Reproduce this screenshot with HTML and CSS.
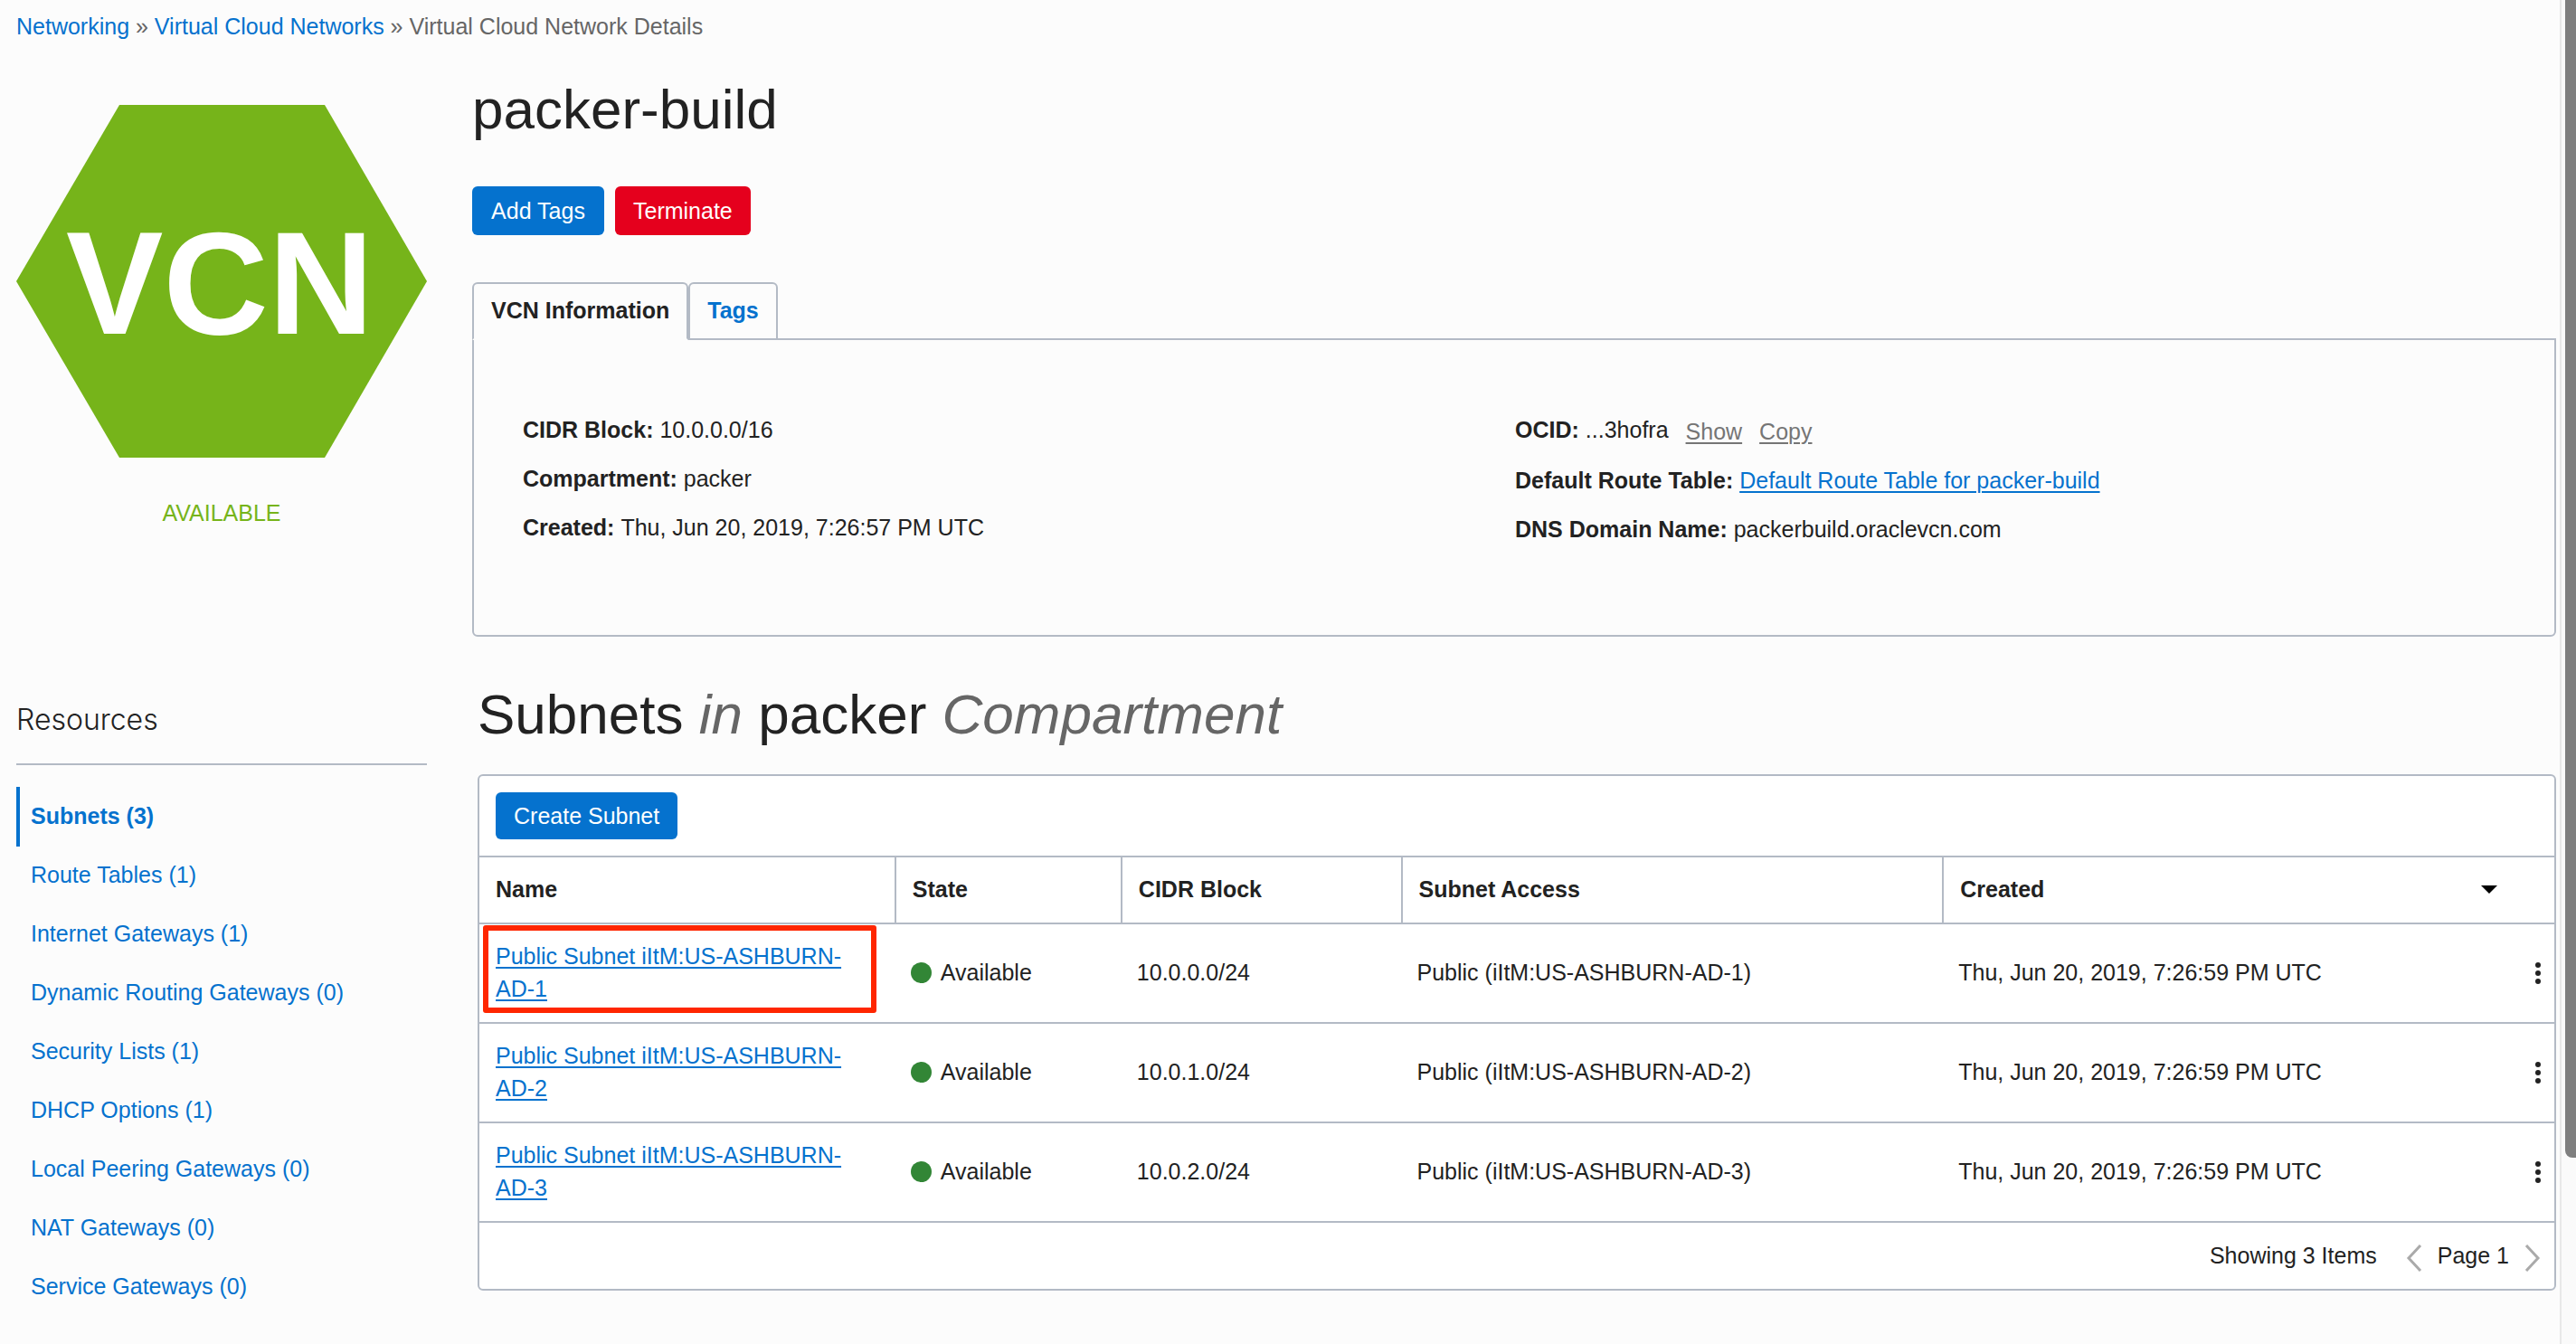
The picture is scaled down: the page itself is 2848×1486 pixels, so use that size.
FILE: index.html
```html
<!DOCTYPE html>
<html lang="en">
<head>
<meta charset="utf-8">
<title>packer-build - Virtual Cloud Network Details</title>
<link rel="stylesheet" href="styles.css">
</head>
<body>
<div class="page">
  <nav class="breadcrumb" aria-label="Breadcrumb">
    <a href="#">Networking</a> » <a href="#">Virtual Cloud Networks</a> » <span>Virtual Cloud Network Details</span>
  </nav>

  <div class="layout">
    <aside class="status">
      <svg class="status-icon" viewBox="0 0 454 390" role="img" aria-label="VCN">
        <polygon points="0,195 114,0 341,0 454,195 341,390 114,390"/>
        <text x="225" y="253" text-anchor="middle">VCN</text>
      </svg>
      <p class="status-label">AVAILABLE</p>
    </aside>

    <main class="details">
      <h1>packer-build</h1>
      <div class="actions">
        <button type="button" class="btn btn-primary">Add Tags</button>
        <button type="button" class="btn btn-danger">Terminate</button>
      </div>
      <div class="tabs" role="tablist">
        <button type="button" class="tab tab-active" role="tab" aria-selected="true">VCN Information</button>
        <button type="button" class="tab" role="tab" aria-selected="false">Tags</button>
      </div>
      <div class="panel" role="tabpanel">
        <dl class="facts">
          <div><dt>CIDR Block:</dt> <dd>10.0.0.0/16</dd></div>
          <div><dt>Compartment:</dt> <dd>packer</dd></div>
          <div><dt>Created:</dt> <dd>Thu, Jun 20, 2019, 7:26:57 PM UTC</dd></div>
        </dl>
        <dl class="facts">
          <div class="fact-ocid"><dt>OCID:</dt> <dd>...3hofra</dd> <a class="muted" href="#">Show</a> <a class="muted" href="#">Copy</a></div>
          <div><dt>Default Route Table:</dt> <dd><a class="link" href="#">Default Route Table for packer-build</a></dd></div>
          <div><dt>DNS Domain Name:</dt> <dd>packerbuild.oraclevcn.com</dd></div>
        </dl>
      </div>
    </main>

    <nav class="resources" aria-label="Resources">
      <h3>Resources</h3>
      <ul>
        <li><a class="current" href="#">Subnets (3)</a></li>
        <li><a href="#">Route Tables (1)</a></li>
        <li><a href="#">Internet Gateways (1)</a></li>
        <li><a href="#">Dynamic Routing Gateways (0)</a></li>
        <li><a href="#">Security Lists (1)</a></li>
        <li><a href="#">DHCP Options (1)</a></li>
        <li><a href="#">Local Peering Gateways (0)</a></li>
        <li><a href="#">NAT Gateways (0)</a></li>
        <li><a href="#">Service Gateways (0)</a></li>
      </ul>
    </nav>

    <section class="subnets">
      <h2>Subnets <em>in</em> packer <em>Compartment</em></h2>
      <div class="box">
        <div class="toolbar">
          <button type="button" class="btn btn-primary btn-compact">Create Subnet</button>
        </div>
        <table>
          <colgroup>
            <col class="col-name"><col class="col-state"><col class="col-cidr"><col class="col-access"><col><col class="col-menu">
          </colgroup>
          <thead>
            <tr>
              <th scope="col">Name</th>
              <th scope="col">State</th>
              <th scope="col">CIDR Block</th>
              <th scope="col">Subnet Access</th>
              <th scope="col" colspan="2"><div class="sortable">Created<svg class="sort" viewBox="0 0 18 9" aria-hidden="true"><path d="M0 0h18L9 9z"/></svg></div></th>
            </tr>
          </thead>
          <tbody>
            <tr>
              <td class="name marked"><a class="link" href="#">Public Subnet iItM:US-ASHBURN-AD-1</a></td>
              <td><span class="state">Available</span></td>
              <td>10.0.0.0/24</td>
              <td>Public (iItM:US-ASHBURN-AD-1)</td>
              <td>Thu, Jun 20, 2019, 7:26:59 PM UTC</td>
              <td class="menu"><button type="button" aria-label="Actions"><svg viewBox="0 0 6 24"><circle cx="3" cy="3" r="3"/><circle cx="3" cy="12" r="3"/><circle cx="3" cy="21" r="3"/></svg></button></td>
            </tr>
            <tr>
              <td class="name"><a class="link" href="#">Public Subnet iItM:US-ASHBURN-AD-2</a></td>
              <td><span class="state">Available</span></td>
              <td>10.0.1.0/24</td>
              <td>Public (iItM:US-ASHBURN-AD-2)</td>
              <td>Thu, Jun 20, 2019, 7:26:59 PM UTC</td>
              <td class="menu"><button type="button" aria-label="Actions"><svg viewBox="0 0 6 24"><circle cx="3" cy="3" r="3"/><circle cx="3" cy="12" r="3"/><circle cx="3" cy="21" r="3"/></svg></button></td>
            </tr>
            <tr>
              <td class="name"><a class="link" href="#">Public Subnet iItM:US-ASHBURN-AD-3</a></td>
              <td><span class="state">Available</span></td>
              <td>10.0.2.0/24</td>
              <td>Public (iItM:US-ASHBURN-AD-3)</td>
              <td>Thu, Jun 20, 2019, 7:26:59 PM UTC</td>
              <td class="menu"><button type="button" aria-label="Actions"><svg viewBox="0 0 6 24"><circle cx="3" cy="3" r="3"/><circle cx="3" cy="12" r="3"/><circle cx="3" cy="21" r="3"/></svg></button></td>
            </tr>
          </tbody>
        </table>
        <div class="pager">
          <span class="count">Showing 3 Items</span>
          <button type="button" aria-label="Previous page"><svg viewBox="0 0 18 30"><path d="M16 1L3 15l13 14"/></svg></button>
          <span>Page 1</span>
          <button type="button" aria-label="Next page"><svg viewBox="0 0 18 30"><path d="M2 1l13 14L2 29"/></svg></button>
        </div>
      </div>
    </section>
  </div>
</div>
<div class="scroll-track" aria-hidden="true"><div class="scroll-thumb"></div></div>
</body>
</html>
```
FILE: styles.css
```css
* {
  box-sizing: border-box;
}

html {
  overflow: hidden;
}

body {
  margin: 0;
  background: #fcfcfc;
  color: #222;
  font: 25px/36px "Liberation Sans", Arial, sans-serif;
}

h1,
h2,
h3,
p,
ul,
dl,
dd {
  margin: 0;
  padding: 0;
}

a {
  color: #0572ce;
  text-decoration: none;
}

button {
  border: 0;
  padding: 0;
  background: none;
  color: inherit;
  font: inherit;
  cursor: pointer;
}

svg {
  display: block;
}

.link,
.muted {
  text-decoration: underline;
  text-decoration-thickness: 2px;
  text-underline-offset: 3px;
}

.muted {
  color: #757575;
}

.page {
  padding: 11px 22px 0 18px;
}

.breadcrumb {
  color: #666;
}

.layout {
  display: grid;
  grid-template-columns: 454px minmax(0, 1fr);
  column-gap: 50px;
}

/* Status badge */

.status {
  padding-top: 69px;
}

.status-icon {
  width: 100%;
  fill: #76b41a;
}

.status-icon text {
  fill: #fff;
  font-size: 161px;
  font-weight: bold;
}

.status-label {
  margin-top: 43px;
  color: #76b41a;
  text-align: center;
}

/* VCN details */

.details {
  padding-top: 38px;
}

h1,
h2 {
  font-size: 62px;
  font-weight: normal;
  line-height: 72px;
}

.actions {
  display: flex;
  gap: 12px;
  margin-top: 49px;
}

.btn {
  min-width: 146px;
  height: 54px;
  padding: 0 20px;
  border-radius: 6px;
  color: #fff;
}

.btn-primary {
  background: #0572ce;
}

.btn-danger {
  background: #e5001d;
}

.btn-compact {
  height: 52px;
}

.tabs {
  display: flex;
  margin-top: 52px;
}

.tab {
  height: 64px;
  margin-bottom: -2px;
  padding: 0 19px 2px;
  border: 2px solid #b3bac5;
  border-radius: 6px 6px 0 0;
  color: #0572ce;
  font-weight: bold;
}

.tab-active {
  border-bottom-color: #fcfcfc;
  color: #222;
}

.panel {
  display: grid;
  grid-template-columns: 1097px 1fr;
  padding: 81px 54px 99px;
  border: 2px solid #b3bac5;
  border-radius: 0 0 6px 6px;
}

.facts {
  display: grid;
  align-content: start;
  gap: 18px;
}

dt,
dd {
  display: inline;
}

dt {
  font-weight: bold;
}

.fact-ocid {
  display: flex;
  gap: 7px;
  height: 38px;
}

.fact-ocid .muted {
  margin-left: 12px;
  padding-top: 2px;
}

/* Resource navigation */

.resources {
  padding-top: 71px;
}

h3 {
  padding-bottom: 27px;
  border-bottom: 2px solid #b3bac5;
  font: 300 32px/42px Inter, "Liberation Sans", sans-serif;
}

.resources ul {
  margin-top: 24px;
  list-style: none;
}

.resources li {
  height: 65px;
}

.resources li a {
  display: block;
  padding: 14px 12px 16px;
  border-left: 4px solid transparent;
}

.resources li .current {
  border-left-color: #0572ce;
  font-weight: bold;
}

/* Subnets */

.subnets {
  margin-left: 6px;
  padding-top: 50px;
}

em {
  color: #666;
}

.box {
  margin-top: 30px;
  border: 2px solid #b3bac5;
  border-radius: 6px;
  background: #fff;
}

.toolbar {
  padding: 18px;
}

table {
  width: 100%;
  border-collapse: separate;
  border-spacing: 0;
  table-layout: fixed;
}

.col-name {
  width: 20%;
}

.col-state {
  width: 10.9%;
}

.col-cidr {
  width: 13.5%;
}

.col-access {
  width: 26.1%;
}

.col-menu {
  width: 38px;
}

th,
td {
  padding: 17px 18px 19px;
  border-bottom: 2px solid #b3bac5;
  text-align: left;
}

th {
  border-top: 2px solid #b3bac5;
}

th + th {
  border-left: 2px solid #b3bac5;
}

.sortable {
  display: flex;
  align-items: center;
  justify-content: space-between;
  padding-right: 45px;
}

.sort {
  width: 18px;
}

.name {
  position: relative;
}

.marked::after {
  content: "";
  position: absolute;
  inset: 1px 20px 10px 4px;
  border: 6px solid #ff2600;
  border-radius: 3px;
  pointer-events: none;
}

.state {
  display: flex;
  align-items: center;
  gap: 10px;
}

.state::before {
  content: "";
  width: 23px;
  height: 23px;
  border-radius: 50%;
  background: #328636;
}

.menu {
  padding: 0 15px 0 17px;
}

.menu button {
  display: block;
}

.menu svg {
  width: 6px;
  fill: #222;
}

.pager {
  display: flex;
  align-items: center;
  justify-content: flex-end;
  gap: 17px;
  padding: 17px 15px 19px;
}

.count {
  margin-right: 15px;
}

.pager button {
  padding-top: 7px;
}

.pager svg {
  width: 18px;
  fill: none;
  stroke: #aaa;
  stroke-width: 3;
}

/* Scroll bar */

.scroll-track {
  position: fixed;
  inset: 0 0 0 auto;
  width: 18px;
  padding-left: 4px;
  border-left: 2px solid #e8e8e8;
  background: #fafafa;
}

.scroll-thumb {
  height: 1280px;
  border-radius: 0 0 0 8px;
  background: #7f7f7f;
}
```
